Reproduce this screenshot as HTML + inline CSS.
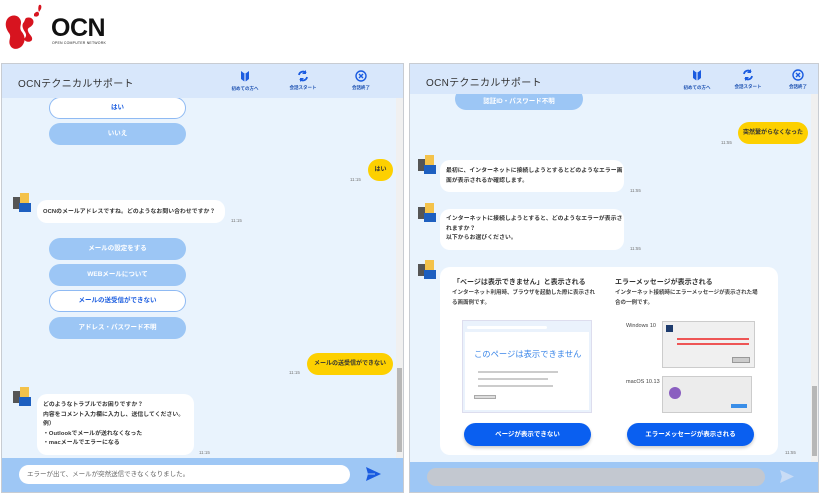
<!DOCTYPE html>
<html><head><meta charset="utf-8"><style>
*{margin:0;padding:0;box-sizing:border-box}
body{width:820px;height:494px;background:#fff;position:relative;overflow:hidden;font-family:"Liberation Sans","Noto Sans CJK JP",sans-serif;color:#333}
.a{position:absolute}
.panel{position:absolute;top:63px;height:430px;border:1px solid #c8ccd2;background:#e9f3fd;overflow:hidden}
.hdr{position:absolute;left:0;top:0;right:0;height:34px;background:#d8e7fb;z-index:2}
.ttl{position:absolute;left:16px;top:11px;font-size:10px;color:#333;letter-spacing:.3px}
.ic{position:absolute;top:6px;width:50px;text-align:center;font-size:4.5px;color:#1a4fb0;font-weight:bold;white-space:nowrap}
.ic svg{display:block;margin:0 auto 3px}
.btn{position:absolute;height:22px;border-radius:11px;background:#9cc6f5;color:#fff;font-size:6.5px;font-weight:bold;text-align:center;line-height:22px;white-space:nowrap}
.btn.w{background:#fff;border:1.5px solid #8fbaf3;color:#1e5fe0;line-height:19px}
.ub{position:absolute;height:22px;border-radius:11px;background:#fdd000;font-size:6px;font-weight:bold;text-align:center;line-height:22px;color:#333;white-space:nowrap}
.bb{position:absolute;background:#fff;border-radius:10px;font-size:6px;font-weight:bold;line-height:10px;padding:6px;color:#333;white-space:nowrap;letter-spacing:.1px}
.tm{position:absolute;font-size:4.5px;color:#777}
.av{position:absolute;width:22px;height:22px}
.sb{position:absolute;right:0;width:7px;background:#f0f0f0}
.bar{position:absolute;left:0;right:0;bottom:0;background:#9ec7f5}
</style></head><body>
<svg class="a" style="left:4px;top:4px" width="44" height="48" viewBox="0 0 44 48">
<path d="M4 14c4-4 10-3 12 1 3 5-2 8 2 13 3 4 4 9 0 14-4 4-10 4-12-1-2-5 2-8-1-12C2 25 0 19 4 14z" fill="#d7141f"/>
<path d="M22 14c5-2 9 2 7 6-2 4-6 3-5 7 1 4 5 5 4 9-2 3-7 2-8-1 2-2 3-4 1-7-2-3-4-7-1-10 1-2 1-3 2-4z" fill="#d7141f"/>
<path d="M30 10c2-3 5-3 5 0 0 3-4 3-5 2z M35 1c2-1 3 1 2 4l-2 3c-1-2-1-5 0-7z" fill="#d7141f"/>
</svg>
<div class="a" style="left:51px;top:14px;font-size:25px;font-weight:900;color:#111;letter-spacing:-0.5px;font-family:'Liberation Sans',sans-serif">OCN</div>
<div class="a" style="left:52px;top:41px;font-size:3.5px;color:#222;letter-spacing:.2px">OPEN COMPUTER NETWORK</div>

<div class="panel" style="left:1px;width:403px">
 <div class="hdr">
  <div class="ttl">OCNテクニカルサポート</div>
  <div class="ic" style="left:218px"><svg width="10" height="13" viewBox="0 0 10 13"><path d="M1 1l4 3 4-3v8l-4 3-4-3z" fill="#1a5be0"/><path d="M5 4v8" stroke="#fff" stroke-width="1"/></svg>初めての方へ</div>
  <div class="ic" style="left:276px"><svg width="12" height="12" viewBox="0 0 12 12"><path d="M2 5a4 4 0 0 1 7-2M10 7a4 4 0 0 1-7 2" stroke="#1a5be0" stroke-width="1.8" fill="none"/><path d="M9 0v4H5z M3 12V8h4z" fill="#1a5be0"/></svg>会話スタート</div>
  <div class="ic" style="left:334px"><svg width="12" height="12" viewBox="0 0 12 12"><circle cx="6" cy="6" r="5" stroke="#1a5be0" stroke-width="1.4" fill="none"/><path d="M4 4l4 4M8 4l-4 4" stroke="#1a5be0" stroke-width="1.4"/></svg>会話終了</div>
 </div>
 <div class="btn w" style="left:47px;top:33px;width:137px">はい</div>
 <div class="btn" style="left:47px;top:59px;width:137px">いいえ</div>
 <div class="ub" style="left:366px;top:95px;width:25px">はい</div>
 <div class="tm" style="left:348px;top:113px">11:15</div>
 <svg class="av" style="left:9px;top:127px" viewBox="0 0 22 22"><rect x="2" y="6" width="10" height="12" fill="#555"/><rect x="9" y="2" width="9" height="10" fill="#f4c24a"/><rect x="8" y="12" width="12" height="9" fill="#1d5fc0"/></svg>
 <div class="bb" style="left:35px;top:136px;width:188px;height:23px;padding-top:7px;font-size:5.8px">OCNのメールアドレスですね。どのようなお問い合わせですか？</div>
 <div class="tm" style="left:229px;top:154px">11:15</div>
 <div class="btn" style="left:47px;top:174px;width:137px">メールの設定をする</div>
 <div class="btn" style="left:47px;top:200px;width:137px">WEBメールについて</div>
 <div class="btn w" style="left:47px;top:226px;width:137px">メールの送受信ができない</div>
 <div class="btn" style="left:47px;top:253px;width:137px">アドレス・パスワード不明</div>
 <div class="ub" style="left:305px;top:289px;width:86px">メールの送受信ができない</div>
 <div class="tm" style="left:287px;top:306px">11:15</div>
 <svg class="av" style="left:9px;top:321px" viewBox="0 0 22 22"><rect x="2" y="6" width="10" height="12" fill="#555"/><rect x="9" y="2" width="9" height="10" fill="#f4c24a"/><rect x="8" y="12" width="12" height="9" fill="#1d5fc0"/></svg>
 <div class="bb" style="left:35px;top:330px;width:157px;height:61px;line-height:9.5px;padding-top:7px;font-size:5.8px">どのようなトラブルでお困りですか？<br>内容をコメント入力欄に入力し、送信してください。<br>例）<br>・Outlookでメールが送れなくなった<br>・macメールでエラーになる</div>
 <div class="tm" style="left:197px;top:386px">11:15</div>
 <div class="sb" style="top:34px;height:361px"><div class="a" style="left:1px;top:270px;width:5px;height:84px;background:#b7b7b7"></div></div>
 <div class="bar" style="height:34px">
  <div class="a" style="left:17px;top:7px;width:331px;height:19px;background:#fff;border-radius:10px;font-size:6.5px;color:#666;line-height:19px;padding-left:8px">エラーが出て、メールが突然送信できなくなりました。</div>
  <svg class="a" style="left:364px;top:9px" width="15" height="14" viewBox="0 0 15 14"><path d="M0 0l15 7-15 7 2-7z" fill="#1a5be0"/><path d="M2 7h7" stroke="#9ec7f5" stroke-width="1"/></svg>
 </div>
</div>

<div class="panel" style="left:409px;width:410px">
 <div class="hdr" style="height:30px">
  <div class="ttl" style="top:10px">OCNテクニカルサポート</div>
  <div class="ic" style="left:262px;top:5px"><svg width="10" height="13" viewBox="0 0 10 13"><path d="M1 1l4 3 4-3v8l-4 3-4-3z" fill="#1a5be0"/><path d="M5 4v8" stroke="#fff" stroke-width="1"/></svg>初めての方へ</div>
  <div class="ic" style="left:313px;top:5px"><svg width="12" height="12" viewBox="0 0 12 12"><path d="M2 5a4 4 0 0 1 7-2M10 7a4 4 0 0 1-7 2" stroke="#1a5be0" stroke-width="1.8" fill="none"/><path d="M9 0v4H5z M3 12V8h4z" fill="#1a5be0"/></svg>会話スタート</div>
  <div class="ic" style="left:363px;top:5px"><svg width="12" height="12" viewBox="0 0 12 12"><circle cx="6" cy="6" r="5" stroke="#1a5be0" stroke-width="1.4" fill="none"/><path d="M4 4l4 4M8 4l-4 4" stroke="#1a5be0" stroke-width="1.4"/></svg>会話終了</div>
 </div>
 <div class="btn" style="left:45px;top:24px;width:128px;height:22px;line-height:28px">認証ID・パスワード不明</div>
 <div class="ub" style="left:328px;top:58px;width:70px">突然繋がらなくなった</div>
 <div class="tm" style="left:311px;top:76px">11:55</div>
 <svg class="av" style="left:6px;top:89px" viewBox="0 0 22 22"><rect x="2" y="6" width="10" height="12" fill="#555"/><rect x="9" y="2" width="9" height="10" fill="#f4c24a"/><rect x="8" y="12" width="12" height="9" fill="#1d5fc0"/></svg>
 <div class="bb" style="left:30px;top:96px;width:184px;height:32px;line-height:10px;padding-top:6px;font-size:5.8px">最初に、インターネットに接続しようとするとどのようなエラー画<br>面が表示されるか確認します。</div>
 <div class="tm" style="left:220px;top:124px">11:55</div>
 <svg class="av" style="left:6px;top:137px" viewBox="0 0 22 22"><rect x="2" y="6" width="10" height="12" fill="#555"/><rect x="9" y="2" width="9" height="10" fill="#f4c24a"/><rect x="8" y="12" width="12" height="9" fill="#1d5fc0"/></svg>
 <div class="bb" style="left:30px;top:145px;width:184px;height:41px;line-height:9.5px;padding-top:6px;font-size:5.8px">インターネットに接続しようとすると、どのようなエラーが表示さ<br>れますか？<br>以下からお選びください。</div>
 <div class="tm" style="left:220px;top:182px">11:55</div>
 <svg class="av" style="left:6px;top:194px" viewBox="0 0 22 22"><rect x="2" y="6" width="10" height="12" fill="#555"/><rect x="9" y="2" width="9" height="10" fill="#f4c24a"/><rect x="8" y="12" width="12" height="9" fill="#1d5fc0"/></svg>
 <div class="a" style="left:30px;top:203px;width:338px;height:188px;background:#fff;border-radius:10px">
  <div class="a" style="left:13px;top:10px;font-size:7px;font-weight:bold;white-space:nowrap">「ページは表示できません」と表示される</div>
  <div class="a" style="left:12px;top:21px;font-size:5.5px;font-weight:bold;line-height:10px;color:#444;white-space:nowrap">インターネット利用時、ブラウザを起動した際に表示され<br>る画面例です。</div>
  <div class="a" style="left:22px;top:53px;width:130px;height:93px;background:#eaf2fc;border:1px solid #dde;overflow:hidden">
   <div class="a" style="left:2px;top:11px;width:124px;height:78px;background:#fff"></div>
   <div class="a" style="left:4px;top:5px;width:80px;height:3px;background:#fff;border-radius:2px"></div>
   <div class="a" style="left:11px;top:27px;font-size:8.3px;color:#3b86e8;white-space:nowrap">このページは表示できません</div>
   <div class="a" style="left:15px;top:50px;width:80px;height:2px;background:#ccc"></div>
   <div class="a" style="left:15px;top:57px;width:70px;height:2px;background:#ccc"></div>
   <div class="a" style="left:15px;top:64px;width:75px;height:2px;background:#ccc"></div>
   <div class="a" style="left:11px;top:74px;width:22px;height:4px;background:#ddd;border:1px solid #aaa"></div>
  </div>
  <div class="a" style="left:24px;top:156px;width:127px;height:23px;border-radius:12px;background:#0a5ff0;color:#fff;font-size:6.5px;font-weight:bold;text-align:center;line-height:23px;box-shadow:0 2px 3px rgba(0,0,0,.2)">ページが表示できない</div>
  <div class="a" style="left:175px;top:10px;font-size:7px;font-weight:bold;white-space:nowrap">エラーメッセージが表示される</div>
  <div class="a" style="left:175px;top:21px;font-size:5.5px;font-weight:bold;line-height:10px;color:#444;white-space:nowrap">インターネット接続時にエラーメッセージが表示された場<br>合の一例です。</div>
  <div class="a" style="left:186px;top:56px;font-size:5.5px;color:#444">Windows 10</div>
  <div class="a" style="left:222px;top:54px;width:93px;height:47px;background:#f0f0f0;border:1px solid #ccc">
   <div class="a" style="left:3px;top:3px;width:7px;height:7px;background:#1e3c6e"></div>
   <div class="a" style="left:14px;top:16px;width:72px;height:2px;background:#e55"></div>
   <div class="a" style="left:14px;top:21px;width:72px;height:2px;background:#e55"></div>
   <div class="a" style="right:4px;bottom:4px;width:18px;height:6px;background:#ccc;border:1px solid #999"></div>
  </div>
  <div class="a" style="left:186px;top:112px;font-size:5.5px;color:#444">macOS 10.13</div>
  <div class="a" style="left:222px;top:109px;width:90px;height:37px;background:#ececec;border:1px solid #ccc">
   <div class="a" style="left:6px;top:10px;width:12px;height:12px;border-radius:6px;background:#8a5fc0"></div>
   <div class="a" style="right:4px;bottom:4px;width:16px;height:4px;background:#3a8ee8"></div>
  </div>
  <div class="a" style="left:187px;top:156px;width:127px;height:23px;border-radius:12px;background:#0a5ff0;color:#fff;font-size:6.5px;font-weight:bold;text-align:center;line-height:23px;box-shadow:0 2px 3px rgba(0,0,0,.2)">エラーメッセージが表示される</div>
 </div>
 <div class="tm" style="left:375px;top:386px">11:55</div>
 <div class="sb" style="top:30px;height:370px"><div class="a" style="left:1px;top:292px;width:5px;height:70px;background:#b7b7b7"></div></div>
 <div class="bar" style="height:30px">
  <div class="a" style="left:17px;top:6px;width:338px;height:18px;background:#c3c8d0;border-radius:9px"></div>
  <svg class="a" style="left:370px;top:8px" width="14" height="13" viewBox="0 0 15 14"><path d="M0 0l15 7-15 7 2-7z" fill="#c9dcf5"/></svg>
 </div>
</div>
</body></html>
